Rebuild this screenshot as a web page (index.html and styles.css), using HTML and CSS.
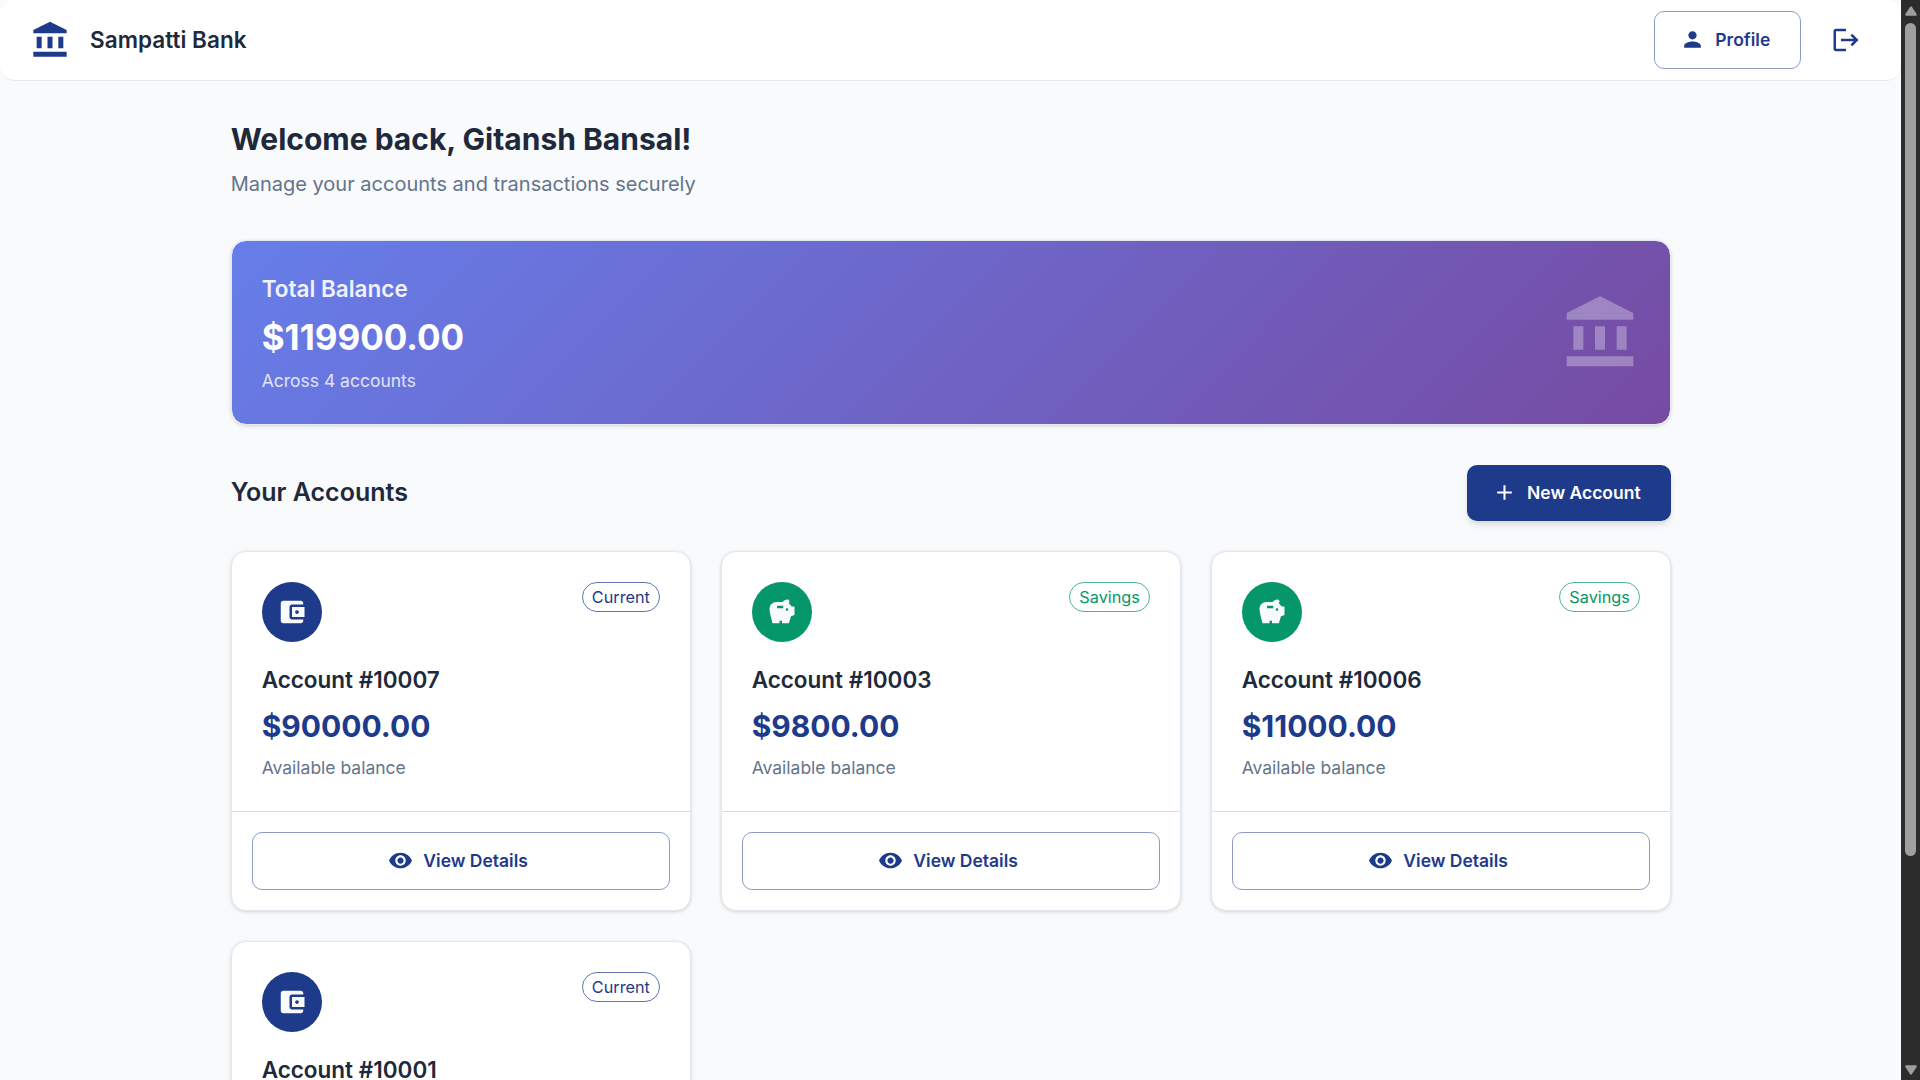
FILE: index.html
```html
<!DOCTYPE html>
<html lang="en">
<head>
<meta charset="utf-8">
<title>Sampatti Bank</title>
<link rel="stylesheet" href="styles.css">
</head>
<body>
<svg class="sprite" aria-hidden="true">
  <symbol id="bank" viewBox="0 0 24 24"><path d="M4 10h3v7H4zm6.5 0h3v7h-3zM2 19h20v3H2zm15-9h3v7h-3zm-5-9L2 6v2h20V6z"/></symbol>
  <symbol id="person" viewBox="0 0 24 24"><path d="M12 12c2.21 0 4-1.79 4-4s-1.79-4-4-4-4 1.79-4 4 1.79 4 4 4m0 2c-2.67 0-8 1.34-8 4v2h16v-2c0-2.66-5.33-4-8-4"/></symbol>
  <symbol id="logout" viewBox="0 0 24 24"><path d="m17 7-1.41 1.41L18.17 11H8v2h10.17l-2.58 2.58L17 17l5-5zM4 5h8V3H4c-1.1 0-2 .9-2 2v14c0 1.1.9 2 2 2h8v-2H4z"/></symbol>
  <symbol id="add" viewBox="0 0 24 24"><path d="M19 13h-6v6h-2v-6H5v-2h6V5h2v6h6z"/></symbol>
  <symbol id="eye" viewBox="0 0 24 24"><path d="M12 4.500C7 4.500 2.730 7.610 1 12c1.730 4.390 6 7.500 11 7.500s9.270-3.110 11-7.500c-1.730-4.390-6-7.500-11-7.500M12 17c-2.760 0-5-2.240-5-5s2.240-5 5-5 5 2.240 5 5-2.240 5-5 5m0-8c-1.660 0-3 1.340-3 3s1.340 3 3 3 3-1.340 3-3-1.340-3-3-3"/></symbol>
  <symbol id="wallet" viewBox="0 0 24 24"><path d="M21 18v1c0 1.100-.9 2-2 2H5c-1.110 0-2-.9-2-2V5c0-1.100.89-2 2-2h14c1.100 0 2 .9 2 2v1h-9c-1.110 0-2 .9-2 2v8c0 1.100.89 2 2 2zm-9-2h10V8H12zm4-2.500c-.83 0-1.500-.67-1.500-1.500s.67-1.500 1.500-1.500 1.500.67 1.500 1.500-.67 1.500-1.500 1.500"/></symbol>
  <symbol id="piggy" viewBox="0 0 24 24"><path d="m19.830 7.500-2.270-2.270c.07-.42.18-.81.32-1.150.11-.26.15-.56.09-.87-.13-.72-.83-1.220-1.570-1.210-1.590.03-3 .81-3.900 2h-5C4.460 4 2 6.460 2 9.500S4.500 21 4.500 21H10v-2h2v2h5.500l1.680-5.590 2.820-.94V7.500zM13 9H8V7h5zm3 2c-.55 0-1-.45-1-1s.45-1 1-1 1 .45 1 1-.45 1-1 1"/></symbol>
</svg>
<div class="window">
  <div class="page">
    <header class="appbar">
      <svg class="brand-icon"><use href="#bank"/></svg>
      <div class="brand">Sampatti Bank</div>
      <button class="btn btn-outlined"><svg class="btn-icon"><use href="#person"/></svg>Profile</button>
      <button class="icon-btn" aria-label="Log out"><svg><use href="#logout"/></svg></button>
    </header>
    <main class="container">
      <h1 class="welcome">Welcome back, Gitansh Bansal!</h1>
      <p class="subtitle">Manage your accounts and transactions securely</p>

      <section class="balance">
        <div class="balance-text">
          <h2 class="balance-label">Total Balance</h2>
          <div class="balance-total">$119900.00</div>
          <p class="balance-note">Across 4 accounts</p>
        </div>
        <svg class="balance-icon"><use href="#bank"/></svg>
      </section>

      <div class="section-head">
        <h2 class="section-title">Your Accounts</h2>
        <button class="btn btn-filled"><svg class="btn-icon"><use href="#add"/></svg>New Account</button>
      </div>

      <div class="grid">
        <article class="card current">
          <div class="card-body">
            <div class="card-top"><span class="avatar"><svg><use href="#wallet"/></svg></span><span class="chip">Current</span></div>
            <h3 class="card-title">Account #10007</h3>
            <div class="amount">$90000.00</div>
            <p class="note">Available balance</p>
          </div>
          <div class="card-actions"><button class="btn btn-outlined wide"><svg class="btn-icon"><use href="#eye"/></svg>View Details</button></div>
        </article>
        <article class="card savings">
          <div class="card-body">
            <div class="card-top"><span class="avatar"><svg><use href="#piggy"/></svg></span><span class="chip">Savings</span></div>
            <h3 class="card-title">Account #10003</h3>
            <div class="amount">$9800.00</div>
            <p class="note">Available balance</p>
          </div>
          <div class="card-actions"><button class="btn btn-outlined wide"><svg class="btn-icon"><use href="#eye"/></svg>View Details</button></div>
        </article>
        <article class="card savings">
          <div class="card-body">
            <div class="card-top"><span class="avatar"><svg><use href="#piggy"/></svg></span><span class="chip">Savings</span></div>
            <h3 class="card-title">Account #10006</h3>
            <div class="amount">$11000.00</div>
            <p class="note">Available balance</p>
          </div>
          <div class="card-actions"><button class="btn btn-outlined wide"><svg class="btn-icon"><use href="#eye"/></svg>View Details</button></div>
        </article>
        <article class="card current">
          <div class="card-body">
            <div class="card-top"><span class="avatar"><svg><use href="#wallet"/></svg></span><span class="chip">Current</span></div>
            <h3 class="card-title">Account #10001</h3>
          </div>
        </article>
      </div>
    </main>
  </div>
  <div class="scrollbar" aria-hidden="true">
    <svg class="arrow" viewBox="0 0 12 10"><path d="M6 .3Q6.600 .3 7 1L11.600 8Q12.200 9.700 10.800 9.700H1.200Q-.2 9.700 .4 8L5 1Q5.400 .3 6 .3Z"/></svg>
    <div class="thumb"></div>
    <svg class="arrow arrow-down" viewBox="0 0 12 10"><path d="M6 9.700Q6.600 9.700 7 9L11.600 2Q12.200 .3 10.800 .3H1.200Q-.2 .3 .4 2L5 9Q5.400 9.700 6 9.700Z"/></svg>
  </div>
</div>
</body>
</html>
```

FILE: styles.css
```css
* {
  box-sizing: border-box;
}

body {
  margin: 0;
  background: #f8fafc;
  color: #1e293b;
  font-family: Inter, "Liberation Sans", sans-serif;
}

h1, h2, h3, p {
  margin: 0;
}

svg {
  display: block;
  fill: currentColor;
}

.sprite {
  display: none;
}

.window {
  display: flex;
  height: 1080px;
  overflow: hidden;
}

.page {
  flex: 1;
  min-width: 0;
  height: 1080px;
  overflow: hidden;
}

/* Top bar */
.appbar {
  display: flex;
  align-items: center;
  height: 81px;
  padding: 0 30px;
  background: #fff;
  border-bottom: 1px solid #e2e8f0;
  border-radius: 15px;
  color: #1e3a8a;
}

.brand-icon {
  width: 40px;
  height: 40px;
  margin-right: 20px;
}

.brand {
  flex: 1;
  color: #1e293b;
  font-size: 22.5px;
  font-weight: 600;
  letter-spacing: 0.04px;
  line-height: 36px;
}

.icon-btn {
  margin-left: 20px;
  padding: 10px;
  border: 0;
  background: none;
  color: #1e3a8a;
}

.icon-btn svg {
  width: 30px;
  height: 30px;
}

/* Buttons */
.btn {
  display: flex;
  align-items: center;
  justify-content: center;
  height: 58px;
  padding: 0 30px 1px;
  border: 0;
  border-radius: 10px;
  font-family: inherit;
  font-size: 17.5px;
  font-weight: 600;
}

.btn-icon {
  width: 25px;
  height: 25px;
  margin: 0 10px 0 -5px;
}

.btn-outlined {
  background: none;
  border: 1px solid rgba(30, 58, 138, 0.5);
  color: #1e3a8a;
}

.btn-filled {
  height: 56px;
  background: #1e3a8a;
  color: #fff;
  box-shadow: 0 5px 7px -1px rgba(0, 0, 0, 0.1), 0 2px 5px -1px rgba(0, 0, 0, 0.06);
}

.wide {
  width: 100%;
}

/* Content */
.container {
  width: 1500px;
  margin: 0 auto;
  padding: 39px 30px 0;
}

.welcome {
  font-size: 30px;
  font-weight: 700;
  line-height: 39px;
}

.subtitle {
  margin-top: 10px;
  color: #64748b;
  font-size: 20px;
  line-height: 30px;
}

.balance {
  display: flex;
  align-items: center;
  justify-content: space-between;
  height: 185px;
  margin-top: 41px;
  padding: 0 30px;
  border: 1px solid #e2e8f0;
  border-radius: 15px;
  background: linear-gradient(135deg, #667eea 0%, #764ba2 100%) padding-box;
  box-shadow: 0 1px 4px rgba(0, 0, 0, 0.1), 0 1px 3px rgba(0, 0, 0, 0.06);
  color: #fff;
}

.balance-text {
  padding-top: 2px;
}

.balance-label {
  font-size: 22.5px;
  font-weight: 600;
  line-height: 32px;
  opacity: 0.9;
}

.balance-total {
  margin-top: 10px;
  font-size: 35px;
  font-weight: 700;
  line-height: 44px;
}

.balance-note {
  margin-top: 9px;
  font-size: 17.5px;
  line-height: 26px;
  opacity: 0.8;
}

.balance-icon {
  width: 80px;
  height: 80px;
  opacity: 0.3;
}

.section-head {
  display: flex;
  align-items: center;
  justify-content: space-between;
  margin: 40px 0 30px;
}

.section-title {
  padding-bottom: 2px;
  font-size: 25px;
  font-weight: 600;
  line-height: 35px;
}

/* Account cards */
.grid {
  display: grid;
  grid-template-columns: repeat(3, 1fr);
  gap: 30px;
}

.card {
  min-height: 360px;
  background: #fff;
  border: 1px solid #e2e8f0;
  border-radius: 15px;
  box-shadow: 0 1px 4px rgba(0, 0, 0, 0.1), 0 1px 3px rgba(0, 0, 0, 0.06);
}

.card-body {
  height: 259px;
  padding: 30px;
}

.card-top {
  display: flex;
  align-items: flex-start;
  justify-content: space-between;
}

.avatar {
  display: flex;
  align-items: center;
  justify-content: center;
  width: 60px;
  height: 60px;
  border-radius: 50%;
  color: #f8fafc;
}

.avatar svg {
  width: 30px;
  height: 30px;
}

.chip {
  height: 30px;
  padding: 0 8.75px 0 9.25px;
  border: 1px solid;
  border-radius: 15px;
  font-size: 16.25px;
  line-height: 28px;
}

.current .avatar {
  background: #1e3a8a;
}

.current .chip {
  border-color: rgba(30, 58, 138, 0.7);
  color: #1e3a8a;
}

.savings .avatar {
  background: #059669;
}

.savings .chip {
  border-color: rgba(5, 150, 105, 0.7);
  color: #059669;
}

.card-title {
  margin-top: 22px;
  font-size: 22.5px;
  font-weight: 600;
  line-height: 32px;
}

.amount {
  margin-top: 11px;
  color: #1e3a8a;
  font-size: 30px;
  font-weight: 700;
  line-height: 39px;
}

.note {
  margin-top: 9px;
  color: #64748b;
  font-size: 17.5px;
  line-height: 26px;
}

.card-actions {
  padding: 20px;
  border-top: 1px solid #d9dee5;
}

/* Window scrollbar */
.scrollbar {
  display: flex;
  flex: none;
  flex-direction: column;
  align-items: center;
  width: 18.75px;
  padding: 6px 0 5px;
  background: #2c2c2c;
  color: #9f9f9f;
}

.arrow {
  width: 12px;
  height: 10px;
}

.thumb {
  width: 11px;
  height: 833px;
  margin-top: 7px;
  border-radius: 6px;
  background: #9f9f9f;
}

.arrow-down {
  margin-top: auto;
}
```
